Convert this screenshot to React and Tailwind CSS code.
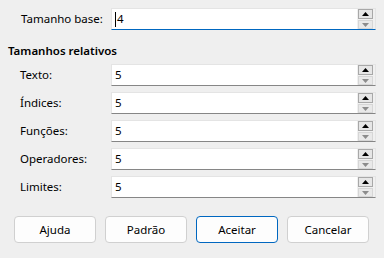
import React from 'react';

const Spinner = () => (
  <div className="flex flex-col justify-center gap-[1px] w-[18px] pl-[1px] pr-[2px] bg-[#f0f0f0]">
    <div className="flex items-center justify-center h-[10px] border border-[#a8a8a8] bg-[#e6e6e6]">
      <svg width="7" height="4" viewBox="0 0 7 4">
        <path d="M3.5 0 L7 4 L0 4 Z" fill="#000" />
      </svg>
    </div>
    <div className="flex items-center justify-center h-[9px] border border-[#d6d6d6] bg-[#e9e9e9]">
      <svg width="7" height="4" viewBox="0 0 7 4">
        <path d="M0 0 L7 0 L3.5 4 Z" fill="#8c8c8c" />
      </svg>
    </div>
  </div>
);

const Field = ({ value, focused }) => (
  <div
    className={`flex h-[22px] w-[265px] border border-[#e4e4e4] bg-white ${
      focused ? 'border-b-[#0067c0]' : 'border-b-[#868686]'
    }`}
  >
    <div className="flex flex-1 items-center pl-[3px]">
      {focused && <span className="w-px h-[15px] bg-black" />}
      <span className={focused ? 'pl-[1px]' : ''}>{value}</span>
    </div>
    <Spinner />
  </div>
);

const rows = ['Texto:', 'Índices:', 'Funções:', 'Operadores:', 'Limites:'];

const buttons = ['Ajuda', 'Padrão', 'Aceitar', 'Cancelar'];

export default function App() {
  return (
    <div
      className="w-[384px] h-[258px] bg-[#efefef] text-[11.5px] leading-[16px] text-black"
      style={{ fontFamily: '"Noto Sans", "Open Sans", sans-serif' }}
    >
      <div className="flex items-center pt-[8px] pl-[21px]">
        <span className="w-[90px]">Tamanho base:</span>
        <Field value="4" focused />
      </div>

      <div className="mt-[13px] pl-[8px] font-semibold">Tamanhos relativos</div>

      <div className="mt-[5px] flex flex-col gap-[6px]">
        {rows.map((label) => (
          <div key={label} className="flex items-center pl-[20px]">
            <span className="w-[91px]">{label}</span>
            <Field value="5" />
          </div>
        ))}
      </div>

      <div className="mt-[18px] flex gap-[9px] pl-[14px]">
        {buttons.map((b) => (
          <button
            key={b}
            className={`w-[82px] h-[27px] rounded-[4px] border bg-[#fdfdfd] ${
              b === 'Aceitar' ? 'border-[#0067c0]' : 'border-[#d0d0d0]'
            }`}
          >
            {b}
          </button>
        ))}
      </div>
    </div>
  );
}
